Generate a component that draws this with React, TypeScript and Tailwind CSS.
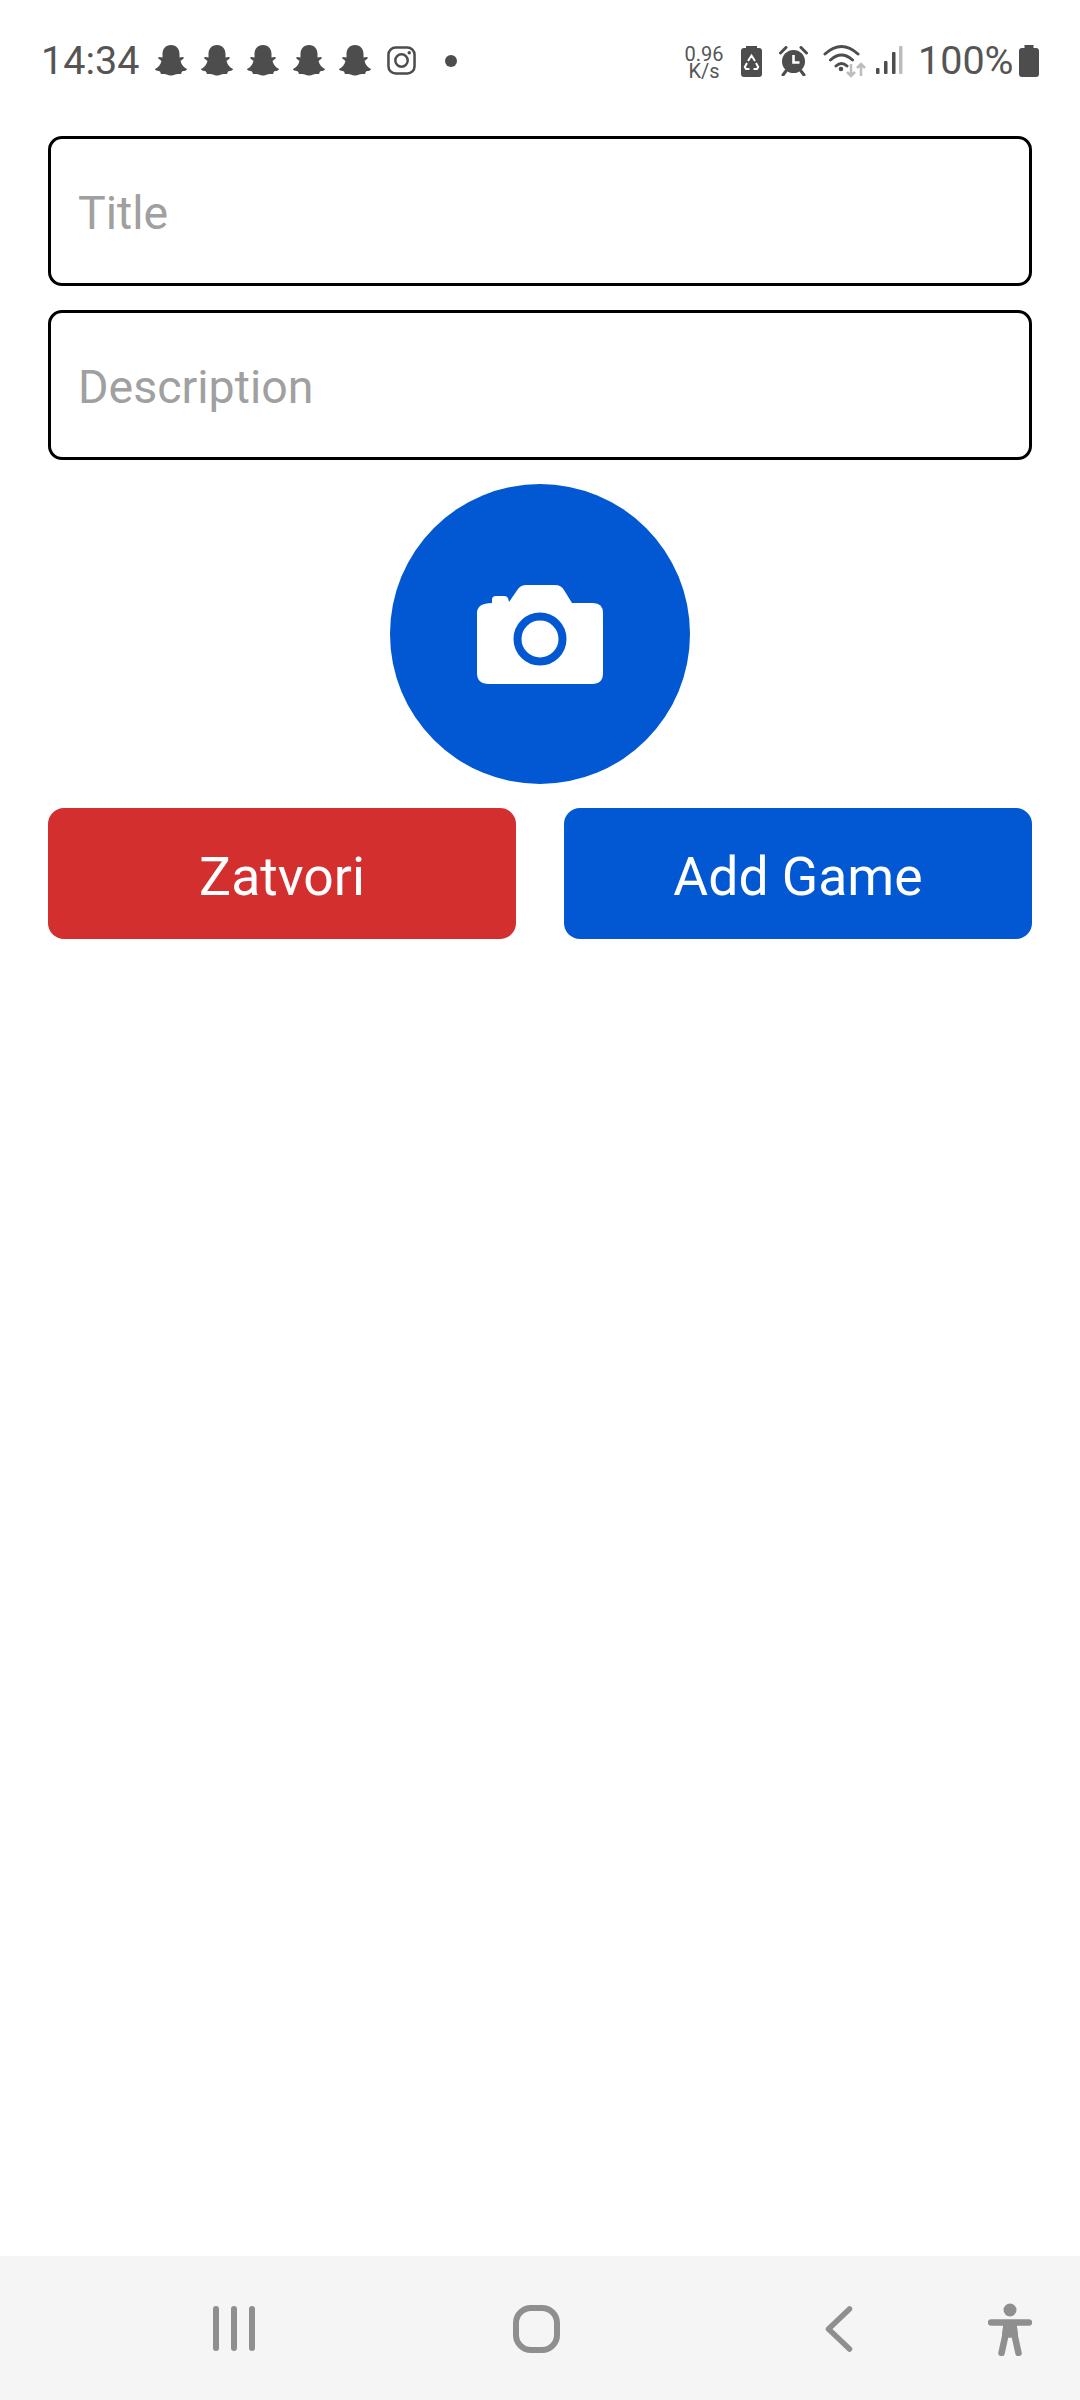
const FONT = "font-['Roboto',sans-serif]";

function Ghost() {
  return (
    <svg width="32" height="31" viewBox="0 0 32 31" fill="#4d4d4d">
      <path d="M16 0C21.500 0 24.500 4 24.500 9V12.500L27.500 12a1 1 0 0 1 .5 2L25.500 16C26.500 20 29 22.500 32 24c0 1.500-3 2-5 2.500l-1 2.500c-3 0-4-.5-6 .5-1.500.8-2.500 1-4 1s-2.500-.2-4-1c-2-1-3-.5-6-.5L5 26.500C3 26 0 25.500 0 24c3-1.500 5.500-4 6.500-8L4 14a1 1 0 0 1 .5-2l3 .5V9C7.500 4 10.500 0 16 0z" />
    </svg>
  );
}

function Instagram() {
  return (
    <svg width="29" height="29" viewBox="0 0 30 30" fill="none" stroke="#4d4d4d" strokeWidth="2.600">
      <rect x="1.500" y="1.500" width="27" height="27" rx="7.500" />
      <circle cx="15" cy="15" r="6.400" />
      <circle cx="23" cy="7" r="1.800" fill="#4d4d4d" stroke="none" />
    </svg>
  );
}

function BatterySaver() {
  return (
    <svg width="21" height="31" viewBox="0 0 21 31">
      <path d="M5 0h11v2h2a3 3 0 0 1 3 3v23a3 3 0 0 1-3 3H3a3 3 0 0 1-3-3V5a3 3 0 0 1 3-3h2z" fill="#4d4d4d" />
      <path d="M7 15l3.500-5.500L14 15M15 17l2.200 4-1.200 2h-3.500M8.500 23H5l-1.200-2L6 17" fill="none" stroke="#fff" strokeWidth="2" />
    </svg>
  );
}

function Alarm() {
  return (
    <svg width="29" height="30" viewBox="0 0 29 30">
      <path d="M1.500 7l5.500-5.500M27.500 7L22 1.500M7 25l-3 4M22 25l3 4" stroke="#4d4d4d" strokeWidth="3" strokeLinecap="round" />
      <circle cx="14.500" cy="15.500" r="11.500" fill="#4d4d4d" />
      <path d="M14.500 9v7.500h6" fill="none" stroke="#fff" strokeWidth="2.600" />
    </svg>
  );
}

function Wifi() {
  return (
    <svg width="44" height="36" viewBox="0 0 44 36" fill="none">
      <path d="M2 10Q18.500-5 35 10M7.500 16Q18.500 6 29.500 16M13 22Q18.500 17 24 22" stroke="#4d4d4d" strokeWidth="3" strokeLinecap="round" />
      <circle cx="18" cy="25" r="2.300" fill="#4d4d4d" />
      <path d="M28 20v12M24 28l4 4 4-4M38 32V20M34 24l4-4 4 4" stroke="#bdbdbd" strokeWidth="2.500" />
    </svg>
  );
}

function Signal() {
  return (
    <svg width="27" height="29" viewBox="0 0 27 29" fill="#4d4d4d">
      <rect x="0" y="22" width="3.500" height="6" rx="1" />
      <rect x="8" y="15" width="3.500" height="13" rx="1" />
      <rect x="16" y="6" width="3.500" height="22" rx="1" />
      <rect x="23" y="0" width="3.500" height="28" rx="1" fill="#bdbdbd" />
    </svg>
  );
}

function Battery() {
  return (
    <svg width="20" height="32" viewBox="0 0 20 32" fill="#4d4d4d">
      <path d="M5.500 0h9v3H17a3 3 0 0 1 3 3v23a3 3 0 0 1-3 3H3a3 3 0 0 1-3-3V6a3 3 0 0 1 3-3h2.500z" />
    </svg>
  );
}

function StatusBar() {
  return (
    <div className="h-[120px] flex items-start pt-[44px] pl-[41px] text-[#555]">
      <span className="text-[39.5px] leading-[34px] w-[114px]">14:34</span>
      <div className="flex gap-[14px] mt-[1px]">
        <Ghost />
        <Ghost />
        <Ghost />
        <Ghost />
        <Ghost />
      </div>
      <div className="ml-[16px] mt-[2px]">
        <Instagram />
      </div>
      <div className="ml-[29px] mt-[11px] w-[12px] h-[12px] rounded-full bg-[#4d4d4d]" />
      <div className="ml-[227px] w-[40px] flex flex-col items-center text-[20px] leading-[17px] mt-[2px]">
        <span>0.96</span>
        <span>K/s</span>
      </div>
      <div className="ml-[17px] mt-[2px]">
        <BatterySaver />
      </div>
      <div className="ml-[17px] mt-[2px]">
        <Alarm />
      </div>
      <div className="ml-[15px]">
        <Wifi />
      </div>
      <div className="ml-[9px] mt-[2px]">
        <Signal />
      </div>
      <span className="ml-[15px] text-[39.5px] leading-[34px] w-[96px]">100%</span>
      <div className="ml-[5px] mt-[1px]">
        <Battery />
      </div>
    </div>
  );
}

function CameraIcon() {
  return (
    <svg width="126" height="99" viewBox="0 0 126 99">
      <path
        d="M15 18v-3.500Q15 11 19 11h8q4 0 4.500 4L32 17 41 4q3-4 8-4h29q6 0 9 5l8 13h21q10 0 10 10v60q0 11-11 11H12Q0 99 0 88V28q0-10 15-10z"
        fill="#fff"
      />
      <circle cx="63" cy="54" r="22.500" fill="none" stroke="#0258d3" strokeWidth="8" />
    </svg>
  );
}

function NavBar() {
  return (
    <div className="h-[144px] bg-[#f5f5f5] flex items-start pt-[47px] pl-[213px] shrink-0">
      <div className="flex gap-[12px] mt-[3px]">
        <div className="w-[6px] h-[45px] rounded-full bg-[#8f8f8f]" />
        <div className="w-[6px] h-[45px] rounded-full bg-[#8f8f8f]" />
        <div className="w-[6px] h-[45px] rounded-full bg-[#8f8f8f]" />
      </div>
      <div className="ml-[258px] mt-[2px] w-[47px] h-[48px] rounded-[18px] border-[6px] border-[#8f8f8f]" />
      <svg className="ml-[265px] mt-[3px]" width="28" height="46" viewBox="0 0 28 46" fill="none" stroke="#8f8f8f" strokeWidth="5.500" strokeLinecap="round" strokeLinejoin="round">
        <path d="M24.500 3L3.500 23l21 20" />
      </svg>
      <svg className="ml-[135px]" width="44" height="53" viewBox="0 0 44 53" fill="none" stroke="#8f8f8f" strokeLinecap="round">
        <circle cx="22" cy="7" r="6.500" fill="#8f8f8f" stroke="none" />
        <path d="M3 19.500h38" strokeWidth="6.500" />
        <path d="M15.500 20h13l1.500 12-8 3-8-3z" fill="#8f8f8f" stroke="none" />
        <path d="M18.500 22l-1 10L13.500 50M25.500 22l1 10L30.500 50" strokeWidth="6.500" strokeLinejoin="round" />
      </svg>
    </div>
  );
}

export default function App() {
  return (
    <div className={`${FONT} w-full min-h-screen bg-white flex flex-col`}>
      <StatusBar />
      <div className="flex-1 flex flex-col gap-[24px] px-[48px] pt-[16px]">
        <input
          placeholder="Title"
          className="h-[150px] w-full rounded-[14px] border-[3px] border-black pl-[27px] pt-[3px] text-[46.5px] outline-none placeholder:text-[#a0a0a0]"
        />
        <input
          placeholder="Description"
          className="h-[150px] w-full rounded-[14px] border-[3px] border-black pl-[27px] pt-[3px] text-[46.5px] outline-none placeholder:text-[#a0a0a0]"
        />
        <button className="self-center w-[300px] h-[300px] rounded-full bg-[#0258d3] flex items-center justify-center">
          <CameraIcon />
        </button>
        <div className="flex gap-[48px]">
          <button className="flex-1 h-[131px] rounded-[16px] bg-[#d32f2f] text-white text-[53.5px] pt-[7px]">Zatvori</button>
          <button className="flex-1 h-[131px] rounded-[16px] bg-[#0258d3] text-white text-[53.5px] pt-[7px]">Add Game</button>
        </div>
      </div>
      <NavBar />
    </div>
  );
}
